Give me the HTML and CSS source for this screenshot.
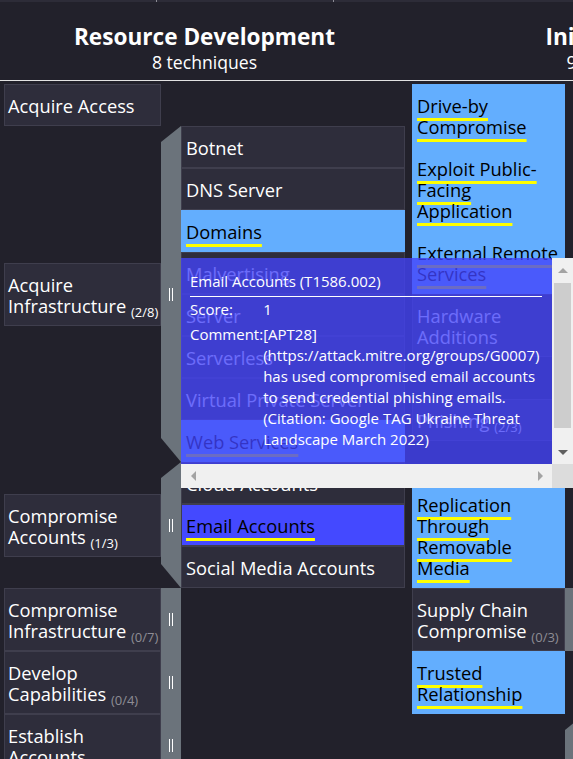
FILE: index.html
```html
<!DOCTYPE html>
<html lang="en">

<head>
    <meta charset="UTF-8">
    <meta name="viewport" content="width=device-width, initial-scale=1.0">
    <title>ATT&amp;CK Navigator Layer</title>
    <link rel="stylesheet" href="styles.css">
</head>

<body>
    <div class="toolbar-edge">
        <div class="edge-first"></div>
        <div class="edge-second"></div>
    </div>

    <!-- tactic headers -->
    <div class="matrix-head">
        <div class="tactic-head resource-dev">
            <h2>Resource Development</h2>
            <p>8 techniques</p>
        </div>
        <div class="tactic-head initial-access">
            <h2>Initial Access</h2>
            <p>9 techniques</p>
        </div>
    </div>

    <div class="matrix-body">
        <!-- Resource Development -->
        <div class="tactic resource-dev">
            <div class="technique-row">
                <div class="cell technique">Acquire Access</div>
            </div>

            <div class="technique-row">
                <div class="cell technique">Acquire Infrastructure <span class="count">(2/8)</span></div>
                <div class="sidebar expanded"><span class="grip"></span></div>
                <div class="subtechniques">
                    <div class="cell">Botnet</div>
                    <div class="cell">DNS Server</div>
                    <div class="cell scored"><span class="annotated">Domains</span></div>
                    <div class="cell">Malvertising</div>
                    <div class="cell">Server</div>
                    <div class="cell">Serverless</div>
                    <div class="cell">Virtual Private Server</div>
                    <div class="cell scored"><span class="annotated">Web Services</span></div>
                </div>
            </div>

            <div class="technique-row">
                <div class="cell technique">Compromise Accounts <span class="count">(1/3)</span></div>
                <div class="sidebar expanded"><span class="grip"></span></div>
                <div class="subtechniques">
                    <div class="cell">Cloud Accounts</div>
                    <div class="cell selected"><span class="annotated">Email Accounts</span></div>
                    <div class="cell">Social Media Accounts</div>
                </div>
            </div>

            <div class="technique-row">
                <div class="cell technique">Compromise Infrastructure <span class="count none">(0/7)</span></div>
                <div class="sidebar"><span class="grip"></span></div>
            </div>

            <div class="technique-row">
                <div class="cell technique">Develop Capabilities <span class="count none">(0/4)</span></div>
                <div class="sidebar"><span class="grip"></span></div>
            </div>

            <div class="technique-row">
                <div class="cell technique">Establish Accounts <span class="count none">(0/3)</span></div>
                <div class="sidebar"><span class="grip"></span></div>
            </div>
        </div>

        <!-- Initial Access -->
        <div class="tactic initial-access">
            <div class="technique-row">
                <div class="cell technique scored"><span class="annotated">Drive-by Compromise</span></div>
            </div>
            <div class="technique-row">
                <div class="cell technique scored"><span class="annotated">Exploit Public-Facing Application</span></div>
            </div>
            <div class="technique-row">
                <div class="cell technique scored"><span class="annotated">External Remote Services</span></div>
            </div>
            <div class="technique-row">
                <div class="cell technique">Hardware Additions</div>
            </div>

            <div class="technique-row">
                <div class="cell technique">Phishing <span class="count">(2/3)</span></div>
                <div class="sidebar expanded"><span class="grip"></span></div>
                <div class="subtechniques">
                    <div class="cell scored"><span class="annotated">Spearphishing Attachment</span></div>
                    <div class="cell scored"><span class="annotated">Spearphishing Link</span></div>
                    <div class="cell">Spearphishing via Service</div>
                </div>
            </div>

            <div class="technique-row">
                <div class="cell technique scored"><span class="annotated">Replication Through Removable Media</span></div>
            </div>
            <div class="technique-row">
                <div class="cell technique">Supply Chain Compromise <span class="count none">(0/3)</span></div>
                <div class="sidebar"><span class="grip"></span></div>
            </div>
            <div class="technique-row">
                <div class="cell technique scored"><span class="annotated">Trusted Relationship</span></div>
            </div>

            <div class="technique-row">
                <div class="cell technique">Valid Accounts <span class="count none">(0/4)</span></div>
                <div class="sidebar expanded"><span class="grip"></span></div>
                <div class="subtechniques">
                    <div class="cell">Cloud Accounts</div>
                    <div class="cell">Default Accounts</div>
                    <div class="cell">Domain Accounts</div>
                    <div class="cell">Local Accounts</div>
                </div>
            </div>
        </div>
    </div>

    <!-- hover tooltip for Email Accounts -->
    <div class="tooltip">
        <div class="tooltip-body">
            <div class="tooltip-title">Email Accounts (T1586.002)</div>
            <hr>
            <table>
                <tr>
                    <th>Score:</th>
                    <td>1</td>
                </tr>
                <tr>
                    <th>Comment:</th>
                    <td>[APT28](https://attack.mitre.org/groups/G0007) has used compromised email accounts to send credential phishing emails. (Citation: Google TAG Ukraine Threat Landscape March 2022)</td>
                </tr>
            </table>
        </div>
        <div class="scroll-v">
            <div class="scroll-btn">
                <svg width="10" height="5" viewBox="0 0 10 5"><polygon points="0,5 5,0 10,5" fill="#a3a3a3"/></svg>
            </div>
            <div class="scroll-track">
                <div class="scroll-thumb"></div>
            </div>
            <div class="scroll-btn">
                <svg width="10" height="5" viewBox="0 0 10 5"><polygon points="0,0 10,0 5,5" fill="#5f5f5f"/></svg>
            </div>
        </div>
        <div class="scroll-h">
            <div class="scroll-btn">
                <svg width="5" height="10" viewBox="0 0 5 10"><polygon points="5,0 5,10 0,5" fill="#a3a3a3"/></svg>
            </div>
            <div class="scroll-btn">
                <svg width="5" height="10" viewBox="0 0 5 10"><polygon points="0,0 5,5 0,10" fill="#a3a3a3"/></svg>
            </div>
        </div>
        <div class="scroll-corner"></div>
    </div>
</body>

</html>
```

FILE: styles.css
```css
html,
body {
    margin: 0;
    height: 100%;
    overflow: hidden;
}

body {
    position: relative;
    background-color: #22212b;
    color: #fff;
    font-family: "Open Sans", "Noto Sans", sans-serif;
}

.toolbar-edge {
    display: flex;
    height: 2px;
    background-color: #2d2c38;
}

.edge-first {
    width: 156px;
    border-right: 1px solid #8d8c96;
}

.edge-second {
    width: 176px;
    border-right: 1px solid #8d8c96;
}

/* headers */
.matrix-head {
    display: flex;
    gap: 7px;
    padding-left: 4px;
    border-bottom: 1px solid #e2e2e2;
}

.tactic-head {
    flex: none;
    text-align: center;
    padding: 21px 0 7px;
}

.tactic-head h2 {
    margin: 0;
    font-size: 22.6px;
    line-height: 28px;
    font-weight: 700;
}

.tactic-head p {
    margin: 0;
    font-size: 17.6px;
    line-height: 22px;
}

.resource-dev {
    width: 401px;
}

.initial-access {
    width: 414px;
}

/* matrix */
.matrix-body {
    display: flex;
    gap: 7px;
    align-items: flex-start;
    padding: 3px 0 0 4px;
}

.tactic {
    flex: none;
}

.technique-row {
    display: flex;
    align-items: center;
}

.cell {
    box-sizing: border-box;
    border: 1px solid #3f3e4d;
    background-color: #2e2d3b;
    padding: 10px 4px 9px;
    font-size: 18.3px;
    line-height: 21px;
}

.technique {
    flex: none;
}

.resource-dev .technique {
    width: 157px;
    padding-left: 3px;
    padding-right: 1px;
}

.initial-access .technique {
    width: 153px;
    padding-right: 2px;
}

.cell.scored {
    background-color: #63aefe;
    border-color: #63aefe;
    color: #000;
}

.cell.selected {
    background-color: #4449ff;
    color: #000;
}

.annotated {
    text-decoration-line: underline;
    text-decoration-color: #ffff00;
    text-decoration-thickness: 3px;
    text-underline-offset: 5px;
}

.count {
    font-size: 13px;
    line-height: 0;
    vertical-align: -4px;
}

.count.none {
    color: #8e8d95;
}

.sidebar {
    flex: none;
    align-self: stretch;
    width: 20px;
    background-color: #6b737b;
    display: flex;
    align-items: center;
    justify-content: center;
}

.sidebar.expanded {
    clip-path: polygon(0 16px, 100% 0, 100% 100%, 0 calc(100% - 24px));
}

.grip {
    width: 1.5px;
    height: 13px;
    border-left: 1.5px solid #fff;
    border-right: 1.5px solid #fff;
}

.subtechniques {
    flex: none;
    width: 224px;
}

.initial-access .subtechniques {
    width: 241px;
}

.initial-access .subtechniques .cell {
    white-space: nowrap;
    overflow: hidden;
}

/* tooltip */
.tooltip {
    position: absolute;
    left: 181px;
    top: 258px;
    width: 392px;
    height: 230px;
    display: grid;
    grid-template-columns: 1fr 21px;
    grid-template-rows: 1fr 24px;
    z-index: 5;
}

.tooltip-body {
    background-color: rgba(66, 66, 250, 0.78);
    padding: 13px 10px 0 9px;
    font-size: 15px;
    line-height: 21px;
    overflow: hidden;
}

.tooltip hr {
    border: 0;
    border-top: 1px solid #fff;
    margin: 4px 0 0;
}

.tooltip table {
    border-collapse: collapse;
}

.tooltip th {
    font-weight: normal;
    text-align: left;
    vertical-align: top;
    white-space: nowrap;
    padding: 2px 0;
}

.tooltip td {
    padding: 2px 0;
}

.scroll-v {
    background-color: #f0f0f0;
    display: flex;
    flex-direction: column;
}

.scroll-btn {
    flex: none;
    height: 24px;
    display: flex;
    align-items: center;
    justify-content: center;
}

.scroll-track {
    flex: 1;
    padding: 1px 2px 0;
}

.scroll-thumb {
    height: 145px;
    background-color: #cdcdcd;
}

.scroll-h {
    background-color: #f0f0f0;
    display: flex;
    justify-content: space-between;
}

.scroll-h .scroll-btn {
    width: 24px;
    height: auto;
}

.scroll-corner {
    background-color: #dcdcdc;
}
```
